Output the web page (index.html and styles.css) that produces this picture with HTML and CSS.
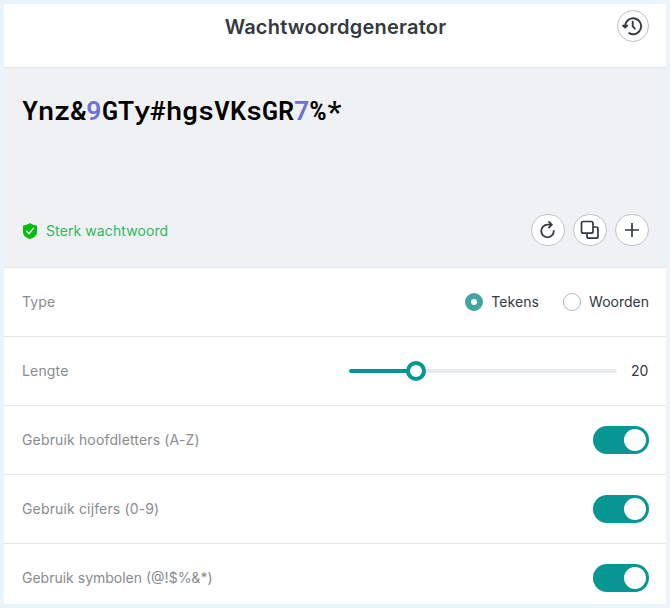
FILE: index.html
```html
<!DOCTYPE html>
<html lang="nl">
<head>
<meta charset="utf-8">
<title>Wachtwoordgenerator</title>
<link rel="stylesheet" href="styles.css">
</head>
<body>
<main class="panel">
  <header class="header">
    <h1 class="title">Wachtwoordgenerator</h1>
    <button class="round history" aria-label="Geschiedenis">
      <svg width="22" height="22" viewBox="0 0 22 22" fill="none" stroke="#343942" stroke-width="1.9" stroke-linecap="round" stroke-linejoin="round"><path d="M3.200 10.500A8 8 0 1 1 7.200 18.200"/><path d="M1 10.600h4.200L3.100 12.600z" fill="#343942"/><path d="M10.700 6.600v4.600l2.200 2.400"/></svg>
    </button>
  </header>
  <section class="result">
    <div class="password">Ynz&amp;<span class="digit">9</span>GTy#hgsVKsGR<span class="digit">7</span>%*</div>
    <div class="result-foot">
      <div class="strength">
        <svg class="shield" width="14" height="16" viewBox="0 0 14 16"><path d="M7 0C9 1.500 11.500 2.300 14 2.400V9c0 3.700-3.300 6-7 7-3.700-1-7-3.300-7-7V2.400C2.500 2.300 5 1.500 7 0z" fill="#06bd0b"/><path d="M3.600 8.200l2.500 2.500 4.300-5.400" fill="none" stroke="#fff" stroke-width="1.300" stroke-linecap="round" stroke-linejoin="round"/></svg>
        <span>Sterk wachtwoord</span>
      </div>
      <div class="actions">
        <button class="round" aria-label="Vernieuwen"><svg width="18" height="20" viewBox="0 0 18 20" fill="none" stroke="#343942" stroke-width="1.800" stroke-linecap="round" stroke-linejoin="round"><path d="M14.800 11A6.300 6.300 0 1 1 8.500 4.700h4"/><path d="M10 1.900L12.800 4.700 10 7.500"/></svg></button>
        <button class="round" aria-label="Kopiëren"><svg width="20" height="20" viewBox="0 0 20 20" fill="none" stroke="#343942" stroke-width="1.700" stroke-linejoin="round"><rect x="1.500" y="1.500" width="11.500" height="11.700" rx="2"/><path d="M13 7H16a2 2 0 0 1 2 2v7.200a2 2 0 0 1-2 2H9a2 2 0 0 1-2-2v-3"/></svg></button>
        <button class="round" aria-label="Toevoegen"><svg width="16" height="16" viewBox="0 0 16 16" fill="none" stroke="#343942" stroke-width="1.700"><path d="M1 8h14M8 1v14"/></svg></button>
      </div>
    </div>
  </section>
  <section class="row">
    <span class="label">Type</span>
    <div class="options">
      <span class="option"><i class="radio checked"></i>Tekens</span>
      <span class="option"><i class="radio"></i>Woorden</span>
    </div>
  </section>
  <section class="row">
    <span class="label">Lengte</span>
    <div class="length"><div class="track"><div class="fill"></div><div class="thumb"></div></div><span class="value">20</span></div>
  </section>
  <section class="row"><span class="label">Gebruik hoofdletters (A-Z)</span><span class="switch"><i class="knob"></i></span></section>
  <section class="row"><span class="label">Gebruik cijfers (0-9)</span><span class="switch"><i class="knob"></i></span></section>
  <section class="row"><span class="label symbols">Gebruik symbolen (@!$%&amp;*)</span><span class="switch"><i class="knob"></i></span></section>
</main>
</body>
</html>
```
FILE: styles.css
```css
* { box-sizing: border-box; }
body {
  margin: 0;
  height: 608px;
  padding: 4px;
  overflow: hidden;
  background: #eaf4fa;
  font: 14px/20px Inter, "Liberation Sans", sans-serif;
  color: #343942;
}
.panel { height: 600px; background: #fff; overflow: hidden; }
.header {
  display: grid;
  grid-template-columns: 1fr auto 1fr;
  height: 64px;
  padding: 6px 17px 0 18px;
  border-bottom: 1px solid #e4e6e8;
}
.title {
  grid-column: 2;
  margin: 3px 0 0;
  font-size: 20px;
  line-height: 28px;
  font-weight: 600;
  letter-spacing: 0.22px;
}
.round {
  display: flex;
  align-items: center;
  justify-content: center;
  width: 34px;
  height: 32px;
  padding: 0;
  border: 1px solid #bfc2c8;
  border-radius: 17px;
  background: #fff;
}
.history { justify-self: end; width: 32px; }
.result {
  display: flex;
  flex-direction: column;
  justify-content: space-between;
  height: 200px;
  padding: 24px 17px 21px 18px;
  border-bottom: 1px solid #e4e6e8;
  background: #f0f1f5;
}
.password {
  font: 600 26.67px/36px "Roboto Mono", "DejaVu Sans Mono", monospace;
  color: #000;
}
.digit { color: #6e70d4; }
.result-foot, .strength, .actions, .options, .option, .length {
  display: flex;
  align-items: center;
}
.result-foot { justify-content: space-between; }
.strength { gap: 9px; margin: 2px 0 0 1px; color: #2cba58; letter-spacing: 0.1px; }
.actions { gap: 8px; }
.row {
  display: flex;
  align-items: center;
  justify-content: space-between;
  height: 69px;
  padding: 0 17px 0 18px;
  border-bottom: 1px solid #e4e6e8;
}
.row:last-child { border-bottom-color: transparent; }
.label { color: #888b90; letter-spacing: 0.15px; }
.symbols { letter-spacing: 0; }
.options { gap: 24px; }
.option { gap: 8px; }
.option:first-child { letter-spacing: 0.1px; }
.radio {
  width: 18px;
  height: 18px;
  border: 1px solid #b5b7bd;
  border-radius: 50%;
}
.checked { border: 6px solid #42a5a3; }
.length { gap: 14px; }
.value { width: 18px; }
.track {
  position: relative;
  width: 268px;
  height: 4px;
  border-radius: 2px;
  background: #e9ecef;
}
.fill { width: 67px; height: 4px; border-radius: 2px; background: #079691; }
.thumb {
  position: absolute;
  left: 57px;
  top: -8px;
  width: 20px;
  height: 20px;
  border: 4px solid #079691;
  border-radius: 50%;
  background: #fff;
  box-shadow: 0 2px 8px rgba(0, 0, 0, 0.05);
}
.switch {
  display: flex;
  align-items: center;
  justify-content: flex-end;
  width: 56px;
  height: 28px;
  padding: 3px;
  border-radius: 14px;
  background: #079691;
}
.knob { width: 22px; height: 22px; border-radius: 50%; background: #fff; }
```
